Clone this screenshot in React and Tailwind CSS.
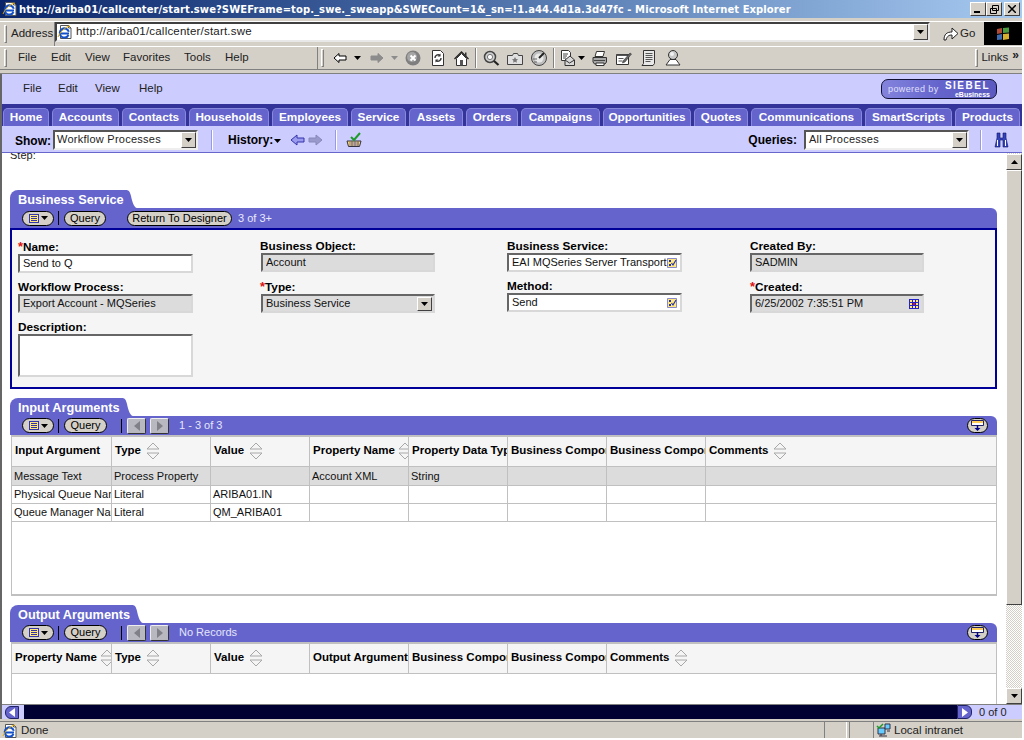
import React from 'react';

const ieMenu = [
  ['File', 'w-[33px]'],
  ['Edit', 'w-[34px]'],
  ['View', 'w-[38px]'],
  ['Favorites', 'w-[61px]'],
  ['Tools', 'w-[41px]'],
  ['Help', 'w-[40px]'],
];

const tabs = [
  ['Home', 'w-[46px]'],
  ['Accounts', 'w-[67px]'],
  ['Contacts', 'w-[64px]'],
  ['Households', 'w-[80px]'],
  ['Employees', 'w-[76px]'],
  ['Service', 'w-[55px]'],
  ['Assets', 'w-[54px]'],
  ['Orders', 'w-[52px]'],
  ['Campaigns', 'w-[79px]'],
  ['Opportunities', 'w-[88px]'],
  ['Quotes', 'w-[54px]'],
  ['Communications', 'w-[111px]'],
  ['SmartScripts', 'w-[87px]'],
  ['Products', 'w-[65px]'],
];

const IeIcon = () => (
  <svg width="16" height="16" viewBox="0 0 16 16" className="shrink-0">
    <path d="M3.5 1.5h8l2.5 2.5v10.5h-10.5z" fill="#fff" stroke="#555" />
    <path d="M11.5 1.5v2.5h2.5" fill="none" stroke="#555" />
    <path d="M3 9.5h9M11.5 11a4.6 4.6 0 1 1 .3-3.2" fill="none" stroke="#1450c8" strokeWidth="2" />
    <path d="M1 13c2-5 7-10 12-11" fill="none" stroke="#e0a800" strokeWidth="1" />
  </svg>
);

const DropButton = ({ className = 'w-[15px] h-[16px]' }) => (
  <div className={`${className} shrink-0 flex items-center justify-center bg-[#d4d0c8] border border-t-white border-l-white border-r-[#404040] border-b-[#404040]`}>
    <svg width="7" height="4" viewBox="0 0 7 4"><path d="M0 0h7L3.5 4z" fill="#000" /></svg>
  </div>
);

const Caret = ({ color = '#000' }) => (
  <svg width="7" height="4" viewBox="0 0 7 4" className="shrink-0"><path d="M0 0h7L3.5 4z" fill={color} /></svg>
);

const Grip = () => <div className="w-[3px] h-[18px] shrink-0 border border-t-white border-l-white border-r-[#808080] border-b-[#808080]" />;

const Sep = () => <div className="w-[2px] h-[20px] shrink-0 border-l border-l-[#808080] border-r border-r-white" />;

const BackIcon = () => (
  <svg width="14" height="12" viewBox="0 0 14 12" className="shrink-0">
    <path d="M1 6l5-4.5V4h7v4H6v2.5z" fill="#fff" stroke="#000" />
  </svg>
);
const FwdIcon = () => (
  <svg width="14" height="12" viewBox="0 0 14 12" className="shrink-0">
    <path d="M13 6L8 1.5V4H1v4h7v2.5z" fill="#8c8c8c" stroke="#8c8c8c" />
  </svg>
);
const StopIcon = () => (
  <svg width="16" height="16" viewBox="0 0 16 16" className="shrink-0">
    <circle cx="8" cy="8" r="7.5" fill="#7f7f7f" />
    <circle cx="7" cy="7" r="5" fill="#a5a5a5" />
    <path d="M5.5 5.5l5 5M10.5 5.5l-5 5" stroke="#fff" strokeWidth="2" />
  </svg>
);
const RefreshIcon = () => (
  <svg width="14" height="16" viewBox="0 0 14 16" className="shrink-0">
    <path d="M1.5.5h8l3 3v12h-11z" fill="#fff" stroke="#333" />
    <path d="M4 8a3 3 0 0 1 5-2.5M10 8a3 3 0 0 1-5 2.5" fill="none" stroke="#333" strokeWidth="1.4" />
    <path d="M9.5 3.5v3h-3zM4.5 12.5v-3h3z" fill="#333" />
  </svg>
);
const HomeIcon = () => (
  <svg width="15" height="15" viewBox="0 0 15 15" className="shrink-0">
    <path d="M.5 8L7.5 1l7 7" fill="none" stroke="#222" strokeWidth="1.3" />
    <path d="M2.5 7.5v7h10v-7L7.5 2.5z" fill="#fff" stroke="#333" />
    <path d="M6 9h3v5.5H6z" fill="#555" />
    <path d="M11 1.5h1.5v4L11 4z" fill="#333" />
  </svg>
);
const SearchIcon = () => (
  <svg width="17" height="16" viewBox="0 0 17 16" className="shrink-0">
    <circle cx="7" cy="7" r="5.5" fill="#cfcfcf" stroke="#444" strokeWidth="1.5" />
    <circle cx="7" cy="7" r="2.6" fill="#fff" stroke="#777" />
    <path d="M11 11l4.5 4" stroke="#222" strokeWidth="2.2" />
  </svg>
);
const FavIcon = () => (
  <svg width="16" height="13" viewBox="0 0 16 13" className="shrink-0">
    <path d="M.5 3.5h5l1-2h4l1 2h4v9H.5z" fill="#e0e0e0" stroke="#444" />
    <path d="M8 5l1 2 2 .3-1.500 1.400.4 2L8 9.700l-1.900 1 .4-2L5 7.300 7 7z" fill="#777" />
  </svg>
);
const HistoryIcon = () => (
  <svg width="16" height="16" viewBox="0 0 16 16" className="shrink-0">
    <circle cx="8" cy="8" r="7.5" fill="#bdbdbd" stroke="#444" />
    <circle cx="8" cy="8" r="4.500" fill="#e8e8e8" />
    <path d="M8 8l5-5" stroke="#222" strokeWidth="2" />
    <path d="M2 9h4M3 12h3" stroke="#666" />
  </svg>
);
const MailIcon = () => (
  <svg width="14" height="16" viewBox="0 0 14 16" className="shrink-0">
    <path d="M.5.5h7l2 2v8h-9z" fill="#fff" stroke="#333" />
    <path d="M2 4h5M2 6h4M2 8h3" stroke="#444" />
    <path d="M4 10l5-4 4.500 4v5.500H4z" fill="#d8d8d8" stroke="#333" />
    <path d="M4 10l4.500 3 5-3" fill="none" stroke="#333" />
  </svg>
);
const PrintIcon = () => (
  <svg width="16" height="15" viewBox="0 0 16 15" className="shrink-0">
    <path d="M4.500.5h8l-1.500 5H3z" fill="#fff" stroke="#333" />
    <path d="M1 6.500h13.500v4.500l-1.500 2H2.500L1 11z" fill="#a8a8a8" stroke="#333" />
    <path d="M2 9.500h11" stroke="#444" />
    <path d="M4 12h8v2.500H4z" fill="#fff" stroke="#333" />
  </svg>
);
const EditIcon = () => (
  <svg width="16" height="14" viewBox="0 0 16 14" className="shrink-0">
    <path d="M.5 3.500h12v10H.5z" fill="#fff" stroke="#333" />
    <path d="M.5 3.500h12V5H.5z" fill="#555" />
    <path d="M2.500 7.500h5M2.500 10h4" stroke="#555" />
    <path d="M7 10L14 2l1.500 1L9 11l-2.500 1z" fill="#666" stroke="#222" strokeWidth=".5" />
  </svg>
);
const DiscussIcon = () => (
  <svg width="15" height="16" viewBox="0 0 15 16" className="shrink-0">
    <path d="M2.500.5h11v13l-1.500 2H1l1.500-2z" fill="#e8e8e8" stroke="#333" />
    <path d="M4.500 3.500h7M4.500 5.500h7M4.500 7.500h7M4.500 9.500h7M4.500 11.500h5" stroke="#555" />
  </svg>
);
const MessengerIcon = () => (
  <svg width="16" height="16" viewBox="0 0 16 16" className="shrink-0">
    <circle cx="8" cy="5" r="4.500" fill="#c8c8c8" stroke="#333" />
    <circle cx="7" cy="4" r="2" fill="#f0f0f0" />
    <path d="M5 9.500h6l4 5.500H1z" fill="#fff" stroke="#333" />
  </svg>
);

const TitleButton = ({ children }) => (
  <div className="w-[16px] h-[14px] flex items-center justify-center bg-[#d4d0c8] border border-t-white border-l-white border-r-[#404040] border-b-[#404040]">
    {children}
  </div>
);

const SiebelLogo = () => (
  <div className="w-[116px] h-[20px] rounded-[7px] border border-[#111133] bg-gradient-to-r from-[#8484dd] via-[#6464cc] to-[#5a5ac0] flex items-center pl-[6px] pr-[6px] text-white leading-none">
    <span className="text-[9px] text-[#e0e0fa] tracking-[0.4px] whitespace-nowrap">powered by</span>
    <div className="ml-auto flex flex-col items-end">
      <span className="text-[10px] font-bold tracking-[1.5px] leading-[10px]">SIEBEL</span>
      <span className="text-[7px] font-bold leading-[7px]">eBusiness</span>
    </div>
  </div>
);

const Pill = ({ children, className = '' }) => (
  <div className={`h-[15px] shrink-0 rounded-[8px] border border-black bg-[#d4d0c8] flex items-center justify-center text-[11px] text-black leading-none ${className}`}>
    {children}
  </div>
);

const MenuPill = () => (
  <Pill className="w-[32px] gap-[2px]">
    <svg width="10" height="9" viewBox="0 0 10 9">
      <path d="M0 0h10v9H0z" fill="#3333aa" />
      <path d="M1 1h8v7H1z" fill="#ffe680" />
      <path d="M2 2.500h6M2 4.500h6M2 6.500h6" stroke="#3333aa" />
    </svg>
    <Caret />
  </Pill>
);

const BarSep = ({ className = '' }) => <div className={`w-px h-[14px] bg-black shrink-0 ${className}`} />;

const PagerButton = ({ dir }) => (
  <div className="w-[19px] h-[16px] shrink-0 rounded-[2px] border border-t-[#eeeeee] border-l-[#eeeeee] border-r-[#333333] border-b-[#333333] bg-[#b8b8c0] flex items-center justify-center">
    <svg width="6" height="10" viewBox="0 0 6 10">
      <path d={dir === 'left' ? 'M6 0v10L0 5z' : 'M0 0v10l6-5z'} fill="#808088" />
    </svg>
  </div>
);

const ExpandPill = () => (
  <Pill className="w-[21px]">
    <svg width="13" height="11" viewBox="0 0 13 11">
      <path d="M.5.5h12v5H.5z" fill="#fff" stroke="#222266" />
      <path d="M1 1h11v2H1z" fill="#ffcc55" />
      <path d="M6.500 5v4" stroke="#000088" strokeWidth="1.500" />
      <path d="M3.500 8h6l-3 3z" fill="#000088" />
    </svg>
  </Pill>
);

const PanelTab = ({ title, widthClass }) => (
  <div className="flex h-[18px] ml-[10px]">
    <div className={`${widthClass} bg-[#6464cc] rounded-tl-[8px] pl-[8px] text-white text-[12.750px] font-bold leading-[19px] whitespace-nowrap`}>
      {title}
    </div>
    <svg width="11" height="18" viewBox="0 0 11 18" className="shrink-0">
      <path d="M0 0C3 0 4 2 5 6 6 11 8 18 11 18H0z" fill="#6464cc" />
    </svg>
  </div>
);

const PanelBar = ({ children }) => (
  <div className="ml-[10px] w-[987px] h-[19px] bg-[#6464cc] rounded-tr-[6px] flex items-center pl-[12px] pr-[9px] text-white text-[11px]">
    {children}
  </div>
);

const Label = ({ required, children, className = '' }) => (
  <div className={`text-[11.750px] font-bold text-black leading-[14px] whitespace-nowrap ${className}`}>
    {required && <span className="text-[#dd1111] text-[13px] leading-none">*</span>}
    {children}
  </div>
);

const Field = ({ value, readOnly, tall, right, w = 'w-[175px]', className = '' }) => (
  <div
    className={`${w} ${tall ? 'h-[43px]' : 'h-[19px]'} border-2 border-t-[#666666] border-l-[#666666] border-r-[#d8d8d8] border-b-[#d8d8d8] ${readOnly ? 'bg-[#dcdcdc]' : 'bg-white'} flex items-center pl-[3px] pr-[1px] text-[11px] text-[#111111] leading-none whitespace-nowrap overflow-hidden ${className}`}
  >
    <span className="flex-1 overflow-hidden">{value}</span>
    {right}
  </div>
);

const PickIcon = () => (
  <svg width="10" height="10" viewBox="0 0 10 10" className="shrink-0 mr-[2px]">
    <path d="M0 0h10v10H0z" fill="#ffe680" />
    <path d="M.5.5h9v9h-9z" fill="none" stroke="#8888cc" />
    <path d="M2 2h2v2H2zM2 6h2v2H2z" fill="#2233aa" />
    <path d="M4.500 5l1.500 2 3-5" fill="none" stroke="#2233aa" strokeWidth="1.200" />
  </svg>
);

const CalendarIcon = () => (
  <svg width="10" height="10" viewBox="0 0 10 10" className="shrink-0 mr-[2px]">
    <path d="M0 0h10v10H0z" fill="#2222cc" />
    <path d="M1 1h2v2H1zM4 1h2v2H4zM7 1h2v2H7zM1 4h2v2H1zM7 4h2v2H7zM1 7h2v2H1zM4 7h2v2H4zM7 7h2v2H7z" fill="#ffe680" />
    <path d="M4 4h2v2H4z" fill="#dd1111" />
  </svg>
);

const SortIcon = ({ className = 'ml-[5px]' }) => (
  <svg width="14" height="20" viewBox="0 0 14 20" className={`shrink-0 ${className}`}>
    <path d="M1 8l6-6 6 6zM1 12l6 6 6-6z" fill="none" stroke="#a8a8a8" />
  </svg>
);

const colClasses = ['w-[100px]', 'w-[99px]', 'w-[99px]', 'w-[99px]', 'w-[99px]', 'w-[99px]', 'w-[99px]', 'flex-1'];

const HeaderRow = ({ cols }) => (
  <div className="flex h-[30px] bg-[#f5f5f5] border-b border-b-[#c0c0c0]">
    {cols.map(([text, sort, sortClass], i) => {
      const last = i === cols.length - 1;
      return (
        <div
          key={i}
          className={`${last ? 'flex-1' : colClasses[i]} pl-[3px] pb-[1px] flex items-center overflow-hidden whitespace-nowrap text-[11.500px] font-bold text-black ${last ? '' : 'border-r border-r-[#c0c0c0]'}`}
        >
          {text}
          {sort && <SortIcon className={sortClass} />}
        </div>
      );
    })}
  </div>
);

const DataRow = ({ cells, gray, h = 'h-[18px]' }) => (
  <div className={`flex ${h} border-b border-b-[#c0c0c0] ${gray ? 'bg-[#dcdcdc]' : 'bg-white'}`}>
    {colClasses.map((c, i) => (
      <div
        key={i}
        className={`${c} pl-[2px] flex items-center overflow-hidden whitespace-nowrap text-[11px] text-[#111111] ${i < 7 ? 'border-r border-r-[#c0c0c0]' : ''}`}
      >
        {cells[i] || ''}
      </div>
    ))}
  </div>
);

const ListBar = ({ status }) => (
  <PanelBar>
    <MenuPill />
    <BarSep className="ml-[4px] mr-[5px]" />
    <Pill className="w-[43px]">Query</Pill>
    <BarSep className="ml-[14px] mr-[5px]" />
    <PagerButton dir="left" />
    <div className="w-[4px]" />
    <PagerButton dir="right" />
    <span className="ml-[10px] text-[#e4e4fa]">{status}</span>
    <div className="ml-auto"><ExpandPill /></div>
  </PanelBar>
);

export default function App() {
  return (
    <div
      className="w-[1022px] h-[738px] flex flex-col bg-[#d4d0c8] overflow-hidden text-black"
      style={{ fontFamily: '"Liberation Sans", Arial, sans-serif' }}
    >
      {/* window title */}
      <div className="h-[18px] shrink-0 bg-gradient-to-r from-[#0a246a] to-[#a6caf0] flex items-center pl-[2px] pr-[2px]">
        <IeIcon />
        <span className="ml-[1px] text-white text-[10px] font-bold whitespace-nowrap tracking-[0.08px]" style={{ fontFamily: '"DejaVu Sans", sans-serif' }}>
          http://ariba01/callcenter/start.swe?SWEFrame=top._swe._sweapp&amp;SWECount=1&amp;_sn=!1.a44.4d1a.3d47fc - Microsoft Internet Explorer
        </span>
        <div className="ml-auto flex">
          <TitleButton><div className="w-[6px] h-[2px] bg-black mt-[6px] mr-[2px]" /></TitleButton>
          <TitleButton>
            <svg width="9" height="9" viewBox="0 0 9 9"><path d="M2.500.5h6v5h-6zM.5 3.500h6v5h-6z" fill="#d4d0c8" stroke="#000" /></svg>
          </TitleButton>
          <div className="ml-[2px]">
            <TitleButton>
              <svg width="8" height="8" viewBox="0 0 8 8"><path d="M0 0l8 8M8 0L0 8" stroke="#000" strokeWidth="1.500" /></svg>
            </TitleButton>
          </div>
        </div>
      </div>

      {/* address row */}
      <div className="h-[25px] shrink-0 mt-[3px] flex items-stretch border-t border-t-white text-[11.500px] text-[#222222]">
        <div className="w-[55px] flex items-center pl-[4px] border-r border-r-[#808080] shrink-0">
          <Grip />
          <span className="ml-[4px]">Address</span>
        </div>
        <div className="w-[875px] h-[20px] bg-white border-2 border-t-[#404040] border-l-[#404040] border-r-[#e8e8e8] border-b-[#e8e8e8] flex items-center shrink-0">
          <IeIcon />
          <span className="ml-[3px] text-[#222222] whitespace-nowrap tracking-[0.2px]">http://ariba01/callcenter/start.swe</span>
          <div className="ml-auto"><DropButton /></div>
        </div>
        <div className="flex-1 flex items-center pl-[13px] gap-[1px]">
          <svg width="16" height="16" viewBox="0 0 16 16">
            <path d="M1 14c0-6 3-8 8-8V2l6 5.500-6 5.500V9c-3 0-5 1-6 5z" fill="#fff" stroke="#222" />
          </svg>
          <span>Go</span>
        </div>
        <div className="w-[38px] h-[23px] bg-black flex items-center justify-center shrink-0">
          <svg width="14" height="14" viewBox="0 0 14 14">
            <path d="M1 2l5-1v5l-5 1z" fill="#b04a36" />
            <path d="M7 1l6-.5v5l-6 .5z" fill="#4a9a3e" />
            <path d="M1 8l5-1v5.500l-5 .5z" fill="#3d6bb0" />
            <path d="M7 7l6-.5V12l-6 1z" fill="#d8b030" />
          </svg>
        </div>
      </div>

      {/* ie menu + buttons */}
      <div className="h-[24px] shrink-0 flex items-center border-t border-t-white border-b border-b-[#808080] text-[11.500px] text-[#222222]">
        <div className="w-[318px] h-full flex items-center pl-[4px] border-r border-r-[#808080] shrink-0">
          <Grip />
          <div className="ml-[11px] flex">
            {ieMenu.map(([m, w]) => <span key={m} className={w}>{m}</span>)}
          </div>
        </div>
        <div className="flex items-center pl-[3px] flex-1 h-full">
          <Grip />
          <div className="ml-[9px] flex items-center">
            <BackIcon />
            <div className="ml-[7px]"><Caret /></div>
            <div className="ml-[9px]"><FwdIcon /></div>
            <div className="ml-[7px]"><Caret color="#8c8c8c" /></div>
            <div className="ml-[7px]"><StopIcon /></div>
            <div className="ml-[10px]"><RefreshIcon /></div>
            <div className="ml-[9px]"><HomeIcon /></div>
            <div className="ml-[6px] mr-[6px]"><Sep /></div>
            <SearchIcon />
            <div className="ml-[7px]"><FavIcon /></div>
            <div className="ml-[8px]"><HistoryIcon /></div>
            <div className="ml-[6px] mr-[6px]"><Sep /></div>
            <MailIcon />
            <div className="ml-[3px]"><Caret /></div>
            <div className="ml-[7px]"><PrintIcon /></div>
            <div className="ml-[8px]"><EditIcon /></div>
            <div className="ml-[9px]"><DiscussIcon /></div>
            <div className="ml-[9px]"><MessengerIcon /></div>
          </div>
          <div className="ml-auto flex items-center h-full">
            <Grip />
            <span className="ml-[3px]">Links</span>
            <span className="ml-[4px] text-[12px] font-bold leading-none mb-[6px]">»</span>
            <div className="w-[3px]" />
          </div>
        </div>
      </div>

      <div className="h-[4px] shrink-0 border-b border-b-[#808080]" />

      {/* siebel frame */}
      <div className="h-[645px] shrink-0 flex flex-col border-l-2 border-l-[#666666] bg-[#ccccff] overflow-hidden">
        <div className="h-[30px] shrink-0 flex items-center pl-[21px] pr-[25px] text-[11.500px] text-[#222222]">
          <span className="w-[35px]">File</span>
          <span className="w-[37px]">Edit</span>
          <span className="w-[44px]">View</span>
          <span>Help</span>
          <div className="ml-auto"><SiebelLogo /></div>
        </div>

        <div className="h-[22px] shrink-0 bg-[#333399] flex items-end pl-[1px] gap-[3px]">
          {tabs.map(([t, w]) => (
            <div
              key={t}
              className={`${w} h-[18px] shrink-0 bg-[#6464cc] rounded-t-[5px] border-t border-x border-[#8888dd] text-white text-[11.750px] font-bold leading-[16px] text-center whitespace-nowrap`}
            >
              {t}
            </div>
          ))}
        </div>

        <div className="h-[27px] shrink-0 flex items-center pt-[1px] pl-[13px] pr-[13px] border-b border-b-[#6666cc] text-[12px] font-bold">
          <span className="mr-[2px] mt-[2px]">Show:</span>
          <div className="w-[145px] h-[20px] bg-white border-2 border-t-[#555555] border-l-[#555555] border-r-[#eeeeee] border-b-[#eeeeee] flex items-center pl-[2px] font-normal text-[11px] text-[#222222] tracking-[0.25px] shrink-0">
            <span>Workflow Processes</span>
            <div className="ml-auto"><DropButton /></div>
          </div>
          <div className="ml-[13px] w-[2px] h-[20px] bg-[#9999dd] border-r border-r-white" />
          <span className="ml-[15px]">History:</span>
          <div className="ml-[1px] mt-[3px]"><Caret /></div>
          <svg width="15" height="12" viewBox="0 0 15 12" className="ml-[9px] shrink-0">
            <path d="M1 6l6-5v3h7v4H7v3z" fill="#9a9aee" stroke="#3333aa" />
          </svg>
          <svg width="15" height="12" viewBox="0 0 15 12" className="ml-[3px] shrink-0">
            <path d="M14 6L8 1v3H1v4h7v3z" fill="#9999cc" stroke="#8888bb" />
          </svg>
          <div className="ml-[12px] w-[2px] h-[20px] bg-[#9999dd] border-r border-r-white" />
          <svg width="16" height="16" viewBox="0 0 16 16" className="ml-[9px] shrink-0">
            <path d="M1 9h14l-1.500 5.500h-11z" fill="#ffd966" stroke="#334" />
            <path d="M3 11h10M3 13h10M6 9v5M9 9v5M12 9v5" stroke="#5555aa" strokeWidth=".7" />
            <path d="M5 5l3 3 6-7" fill="none" stroke="#1e9a2c" strokeWidth="2" />
          </svg>
          <div className="ml-auto flex items-center">
            <span className="mr-[7px]">Queries:</span>
            <div className="w-[165px] h-[20px] bg-white border-2 border-t-[#555555] border-l-[#555555] border-r-[#eeeeee] border-b-[#eeeeee] flex items-center pl-[3px] font-normal text-[11px] text-[#222222] tracking-[0.25px] shrink-0">
              <span>All Processes</span>
              <div className="ml-auto"><DropButton /></div>
            </div>
            <div className="ml-[11px] w-[2px] h-[20px] bg-[#9999dd] border-r border-r-white" />
            <svg width="15" height="16" viewBox="0 0 15 16" className="ml-[12px] shrink-0">
              <path d="M3 1h3v5h3V1h3v5l2 9H9V8H6v7H1l2-9z" fill="#3344bb" stroke="#111166" strokeWidth=".6" />
              <path d="M3 8h1v6H3zM11 8h1v6h-1z" fill="#fff" />
            </svg>
          </div>
        </div>

        {/* page body + scrollbar */}
        <div className="h-[551px] shrink-0 flex bg-white overflow-hidden">
          <div className="w-[1003px] shrink-0 overflow-hidden">
            <div className="h-[9px] overflow-hidden flex items-end pl-[8px] text-[11px] leading-[13px] text-[#222222]">
              <span className="block">Step:</span>
            </div>

            {/* Business Service */}
            <div className="pt-[28px] -ml-[2px]">
              <PanelTab title="Business Service" widthClass="w-[116px]" />
              <div className="ml-[10px] w-[987px] h-[20px] bg-[#6464cc] rounded-tr-[6px] flex items-center pl-[12px] text-[#e8e8fa] text-[11px]">
                <MenuPill />
                <BarSep className="ml-[4px] mr-[5px]" />
                <Pill className="w-[42px]">Query</Pill>
                <div className="w-[21px]" />
                <Pill className="w-[105px]">Return To Designer</Pill>
                <span className="ml-[6px]">3 of 3+</span>
              </div>
              <div className="ml-[10px] w-[987px] h-[161px] border-2 border-[#000099] bg-[#f5f5f5] flex pl-[6px] pt-[10px]">
                <div className="w-[242px] shrink-0">
                  <Label required>Name:</Label>
                  <Field value="Send to Q" />
                  <Label className="mt-[7px]">Workflow Process:</Label>
                  <Field value="Export Account - MQSeries" readOnly />
                  <Label className="mt-[7px]">Description:</Label>
                  <Field value="" tall />
                </div>
                <div className="w-[247px] shrink-0">
                  <Label className="mt-[-1px]">Business Object:</Label>
                  <Field value="Account" readOnly w="w-[174px]" className="ml-[1px]" />
                  <Label required className="mt-[8px]">Type:</Label>
                  <Field value="Business Service" readOnly w="w-[174px]" className="ml-[1px]" right={<DropButton className="w-[15px] h-[14px]" />} />
                </div>
                <div className="w-[243px] shrink-0">
                  <Label className="mt-[-1px]">Business Service:</Label>
                  <Field value="EAI MQSeries Server Transport" right={<PickIcon />} />
                  <Label className="mt-[7px]">Method:</Label>
                  <Field value="Send" right={<PickIcon />} />
                </div>
                <div className="shrink-0">
                  <Label className="mt-[-1px]">Created By:</Label>
                  <Field value="SADMIN" readOnly w="w-[174px]" />
                  <Label required className="mt-[8px]">Created:</Label>
                  <Field value="6/25/2002 7:35:51 PM" readOnly w="w-[174px]" right={<CalendarIcon />} />
                </div>
              </div>
            </div>

            {/* Input Arguments */}
            <div className="pt-[9px] -ml-[2px]">
              <PanelTab title="Input Arguments" widthClass="w-[112px]" />
              <ListBar status="1 - 3 of 3" />
              <div className="ml-[11px] w-[986px] h-[161px] border-y-2 border-x border-[#c0c0c0] bg-white overflow-hidden">
                <HeaderRow
                  cols={[
                    ['Input Argument', false],
                    ['Type', true],
                    ['Value', true],
                    ['Property Name', true, 'ml-[3px]'],
                    ['Property Data Type', false],
                    ['Business Component', false],
                    ['Business Component', false],
                    ['Comments', true],
                  ]}
                />
                <DataRow gray h="h-[19px]" cells={['Message Text', 'Process Property', '', 'Account XML', 'String']} />
                <DataRow cells={['Physical Queue Name', 'Literal', 'ARIBA01.IN']} />
                <DataRow cells={['Queue Manager Name', 'Literal', 'QM_ARIBA01']} />
              </div>
            </div>

            {/* Output Arguments */}
            <div className="pt-[9px] -ml-[2px]">
              <PanelTab title="Output Arguments" widthClass="w-[122px]" />
              <ListBar status="No Records" />
              <div className="ml-[11px] w-[986px] h-[80px] border-x border-t-2 border-[#c0c0c0] bg-white overflow-hidden">
                <HeaderRow
                  cols={[
                    ['Property Name', true, 'ml-[3px]'],
                    ['Type', true],
                    ['Value', true],
                    ['Output Argument', false],
                    ['Business Component', false],
                    ['Business Component', false],
                    ['Comments', true],
                  ]}
                />
              </div>
            </div>
          </div>

          {/* scrollbar */}
          <div className="flex-1 flex flex-col ml-[0px] border-l border-l-white bg-[repeating-conic-gradient(#d4d0c8_0_25%,#ffffff_0_50%)] bg-[length:2px_2px] pt-[1px]">
            <div className="h-[16px] shrink-0 bg-[#d4d0c8] border border-t-white border-l-white border-r-[#404040] border-b-[#404040] flex items-center justify-center">
              <div className="rotate-180 flex"><Caret /></div>
            </div>
            <div className="h-[435px] shrink-0 bg-[#d4d0c8] border border-t-white border-l-white border-r-[#404040] border-b-[#404040]" />
            <div className="mt-auto h-[16px] shrink-0 bg-[#d4d0c8] border border-t-white border-l-white border-r-[#404040] border-b-[#404040] flex items-center justify-center">
              <Caret />
            </div>
          </div>
        </div>

        {/* frame bottom bar */}
        <div className="h-[15px] shrink-0 flex border-t border-t-[#808080] bg-[#ccccff]">
          <div className="w-[22px] shrink-0 flex items-center pl-[3px]">
            <div className="w-[14px] h-[13px] bg-[#6464cc] rounded-l-[6px] flex items-center justify-center border border-[#222266]">
              <svg width="6" height="9" viewBox="0 0 6 9"><path d="M6 0v9L0 4.500z" fill="#fff" /></svg>
            </div>
          </div>
          <div className="w-[933px] shrink-0 bg-[#000033]" />
          <div className="w-[15px] h-[14px] shrink-0 bg-[#6464cc] rounded-r-[6px] flex items-center justify-center border border-[#222266]">
            <svg width="6" height="9" viewBox="0 0 6 9"><path d="M0 0v9l6-4.500z" fill="#fff" /></svg>
          </div>
          <span className="ml-[7px] text-[11px] leading-[14px] text-[#222222]">0 of 0</span>
        </div>
      </div>

      {/* status bar */}
      <div className="flex-1 mt-[2px] flex items-stretch border-t border-t-[#808080] text-[11.500px] text-[#222222]">
        <div className="flex items-center pl-[2px] flex-1">
          <IeIcon />
          <span className="ml-[3px]">Done</span>
        </div>
        <div className="w-[23px] shrink-0 border-l border-l-[#808080] border-r border-r-white" />
        <div className="w-[24px] shrink-0 ml-[2px] border-l border-l-[#808080]" />
        <div className="w-[149px] shrink-0 border-l border-l-[#808080] flex items-center pl-[1px]">
          <svg width="16" height="16" viewBox="0 0 16 16" className="shrink-0">
            <path d="M3 5h7v6H3z" fill="#66ccff" stroke="#334" />
            <path d="M10 1h5v5h-5z" fill="#66ccff" stroke="#334" />
            <path d="M4 13h8M12 8h3M6 11v2" stroke="#334" />
            <path d="M2 3l2 2 4-4" fill="none" stroke="#1e9a2c" strokeWidth="1.500" />
          </svg>
          <span className="ml-[3px] whitespace-nowrap">Local intranet</span>
        </div>
      </div>
    </div>
  );
}
